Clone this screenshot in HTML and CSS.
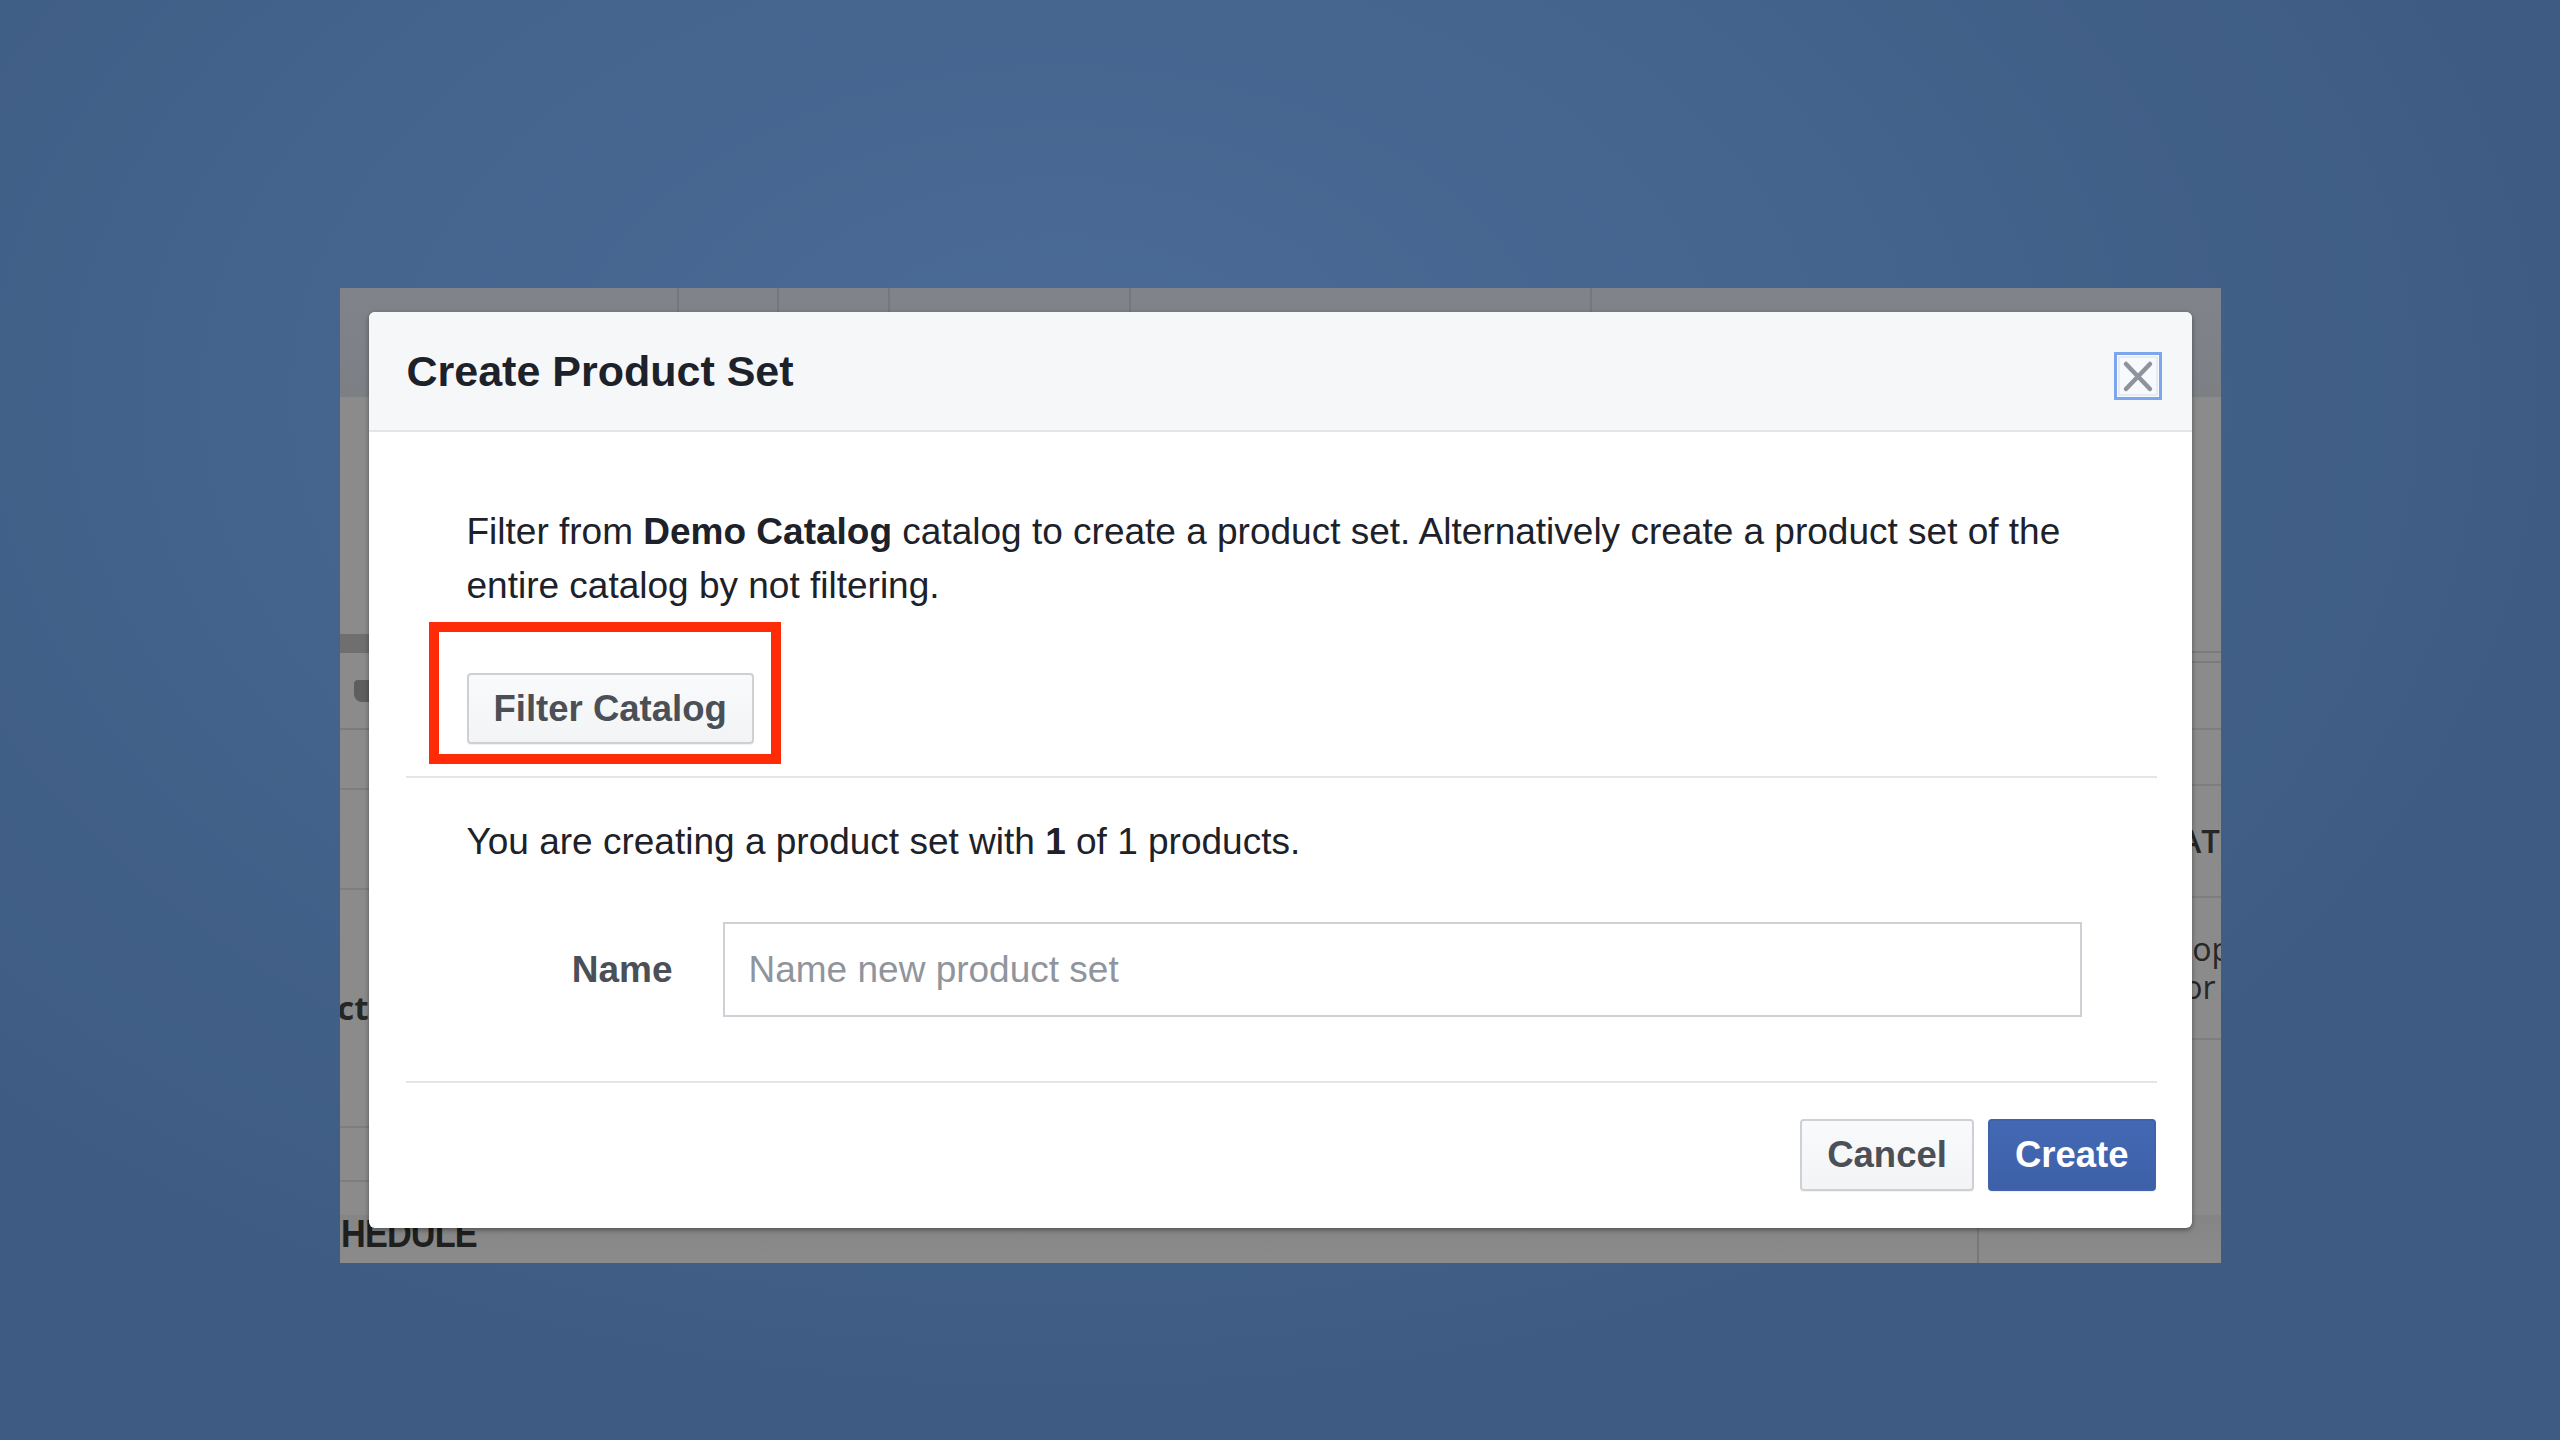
FILE: index.html
```html
<!DOCTYPE html>
<html lang="en">
<head>
<meta charset="utf-8">
<title>Create Product Set</title>
<link rel="stylesheet" href="styles.css">
</head>
<body>
<div class="stage">
  <div class="backdrop">
    <div class="page">
      <div class="page-top">
        <div class="pt-cell pt-1"></div>
        <div class="pt-cell pt-2"></div>
        <div class="pt-cell pt-3"></div>
        <div class="pt-cell pt-4"></div>
        <div class="pt-cell pt-5"></div>
        <div class="pt-cell pt-6"></div>
      </div>
      <div class="page-main">
        <div class="rail rail-left">
          <div class="lr lr-1"></div>
          <div class="lr lr-2"></div>
          <div class="lr lr-3"><span class="blob"></span></div>
          <div class="lr lr-4"></div>
          <div class="lr lr-5"></div>
          <div class="lr lr-6"><span class="rail-text bold">Product</span></div>
          <div class="lr lr-7"></div>
          <div class="lr lr-8"></div>
        </div>
        <div class="page-mid"></div>
        <div class="rail rail-right">
          <div class="rr rr-1"></div>
          <div class="rr rr-2"></div>
          <div class="rr rr-3"></div>
          <div class="rr rr-4"></div>
          <div class="rr rr-5"><span class="rail-text">AT</span></div>
          <div class="rr rr-6"><span class="rail-text stack">hop<br>for</span></div>
          <div class="rr rr-7"></div>
        </div>
      </div>
      <div class="page-bottom">
        <div class="pb-cell"><span class="hedule">HEDULE</span></div>
        <div class="pb-rest"></div>
      </div>
    </div>

    <div class="modal" role="dialog" aria-labelledby="modal-title">
      <div class="modal-header">
        <h1 class="modal-title" id="modal-title">Create Product Set</h1>
        <button class="close" aria-label="Close">
          <svg width="48" height="48" viewBox="0 0 48 48" aria-hidden="true">
            <rect x="1.5" y="1.5" width="45" height="45" fill="#f7f9fd" stroke="#7ea6ec" stroke-width="3"/>
            <rect x="5" y="5" width="38" height="38" fill="none" stroke="#d7deea" stroke-width="1"/>
            <path d="M12 12 L36 37 M36 12 L12 37" stroke="#8e949d" stroke-width="4.5" stroke-linecap="round"/>
          </svg>
        </button>
      </div>
      <div class="modal-body">
        <div class="section section-filter">
          <p class="intro">Filter from <b>Demo Catalog</b> catalog to create a product set. Alternatively create a product set of the entire catalog by not filtering.</p>
          <div class="filter-wrap">
            <button class="btn">Filter Catalog</button>
            <span class="annot"></span>
          </div>
        </div>
        <div class="section section-name">
          <p class="count">You are creating a product set with <b>1</b> of 1 products.</p>
          <div class="name-row">
            <label class="name-label" for="set-name">Name</label>
            <input class="name-input" id="set-name" type="text" placeholder="Name new product set">
          </div>
        </div>
        <div class="footer">
          <button class="btn btn-footer">Cancel</button>
          <button class="btn btn-footer btn-primary">Create</button>
        </div>
      </div>
    </div>
  </div>
</div>
</body>
</html>
```

FILE: styles.css
```css
html, body {
  margin: 0;
  padding: 0;
}

body {
  width: 2560px;
  height: 1440px;
  overflow: hidden;
  font-family: "Liberation Sans", Arial, Helvetica, sans-serif;
  background: radial-gradient(ellipse 1500px 1000px at 1060px 400px, #4c6c98 0%, #45658f 45%, #3e5c83 100%);
}

.stage {
  display: flex;
  justify-content: center;
  padding-top: 288px;
}

/* darkened page behind the dialog */
.backdrop {
  position: relative;
  width: 1881px;
  height: 975px;
  overflow: hidden;
  background: #8b8b8b;
}

.page {
  display: flex;
  flex-direction: column;
  height: 100%;
}

.page-top {
  display: flex;
  height: 109px;
  background: linear-gradient(#80838a, #7c7f84);
  flex: none;
}

.pt-cell {
  border-right: 2px solid #74777c;
  box-sizing: border-box;
}
.pt-1 { width: 339px; }
.pt-2 { width: 100px; }
.pt-3 { width: 111px; }
.pt-4 { width: 241px; }
.pt-5 { width: 461px; }
.pt-6 { flex: 1; border-right: none; }

.page-main {
  flex: 1;
  display: flex;
  min-height: 0;
}

.page-mid {
  flex: 1;
}

.rail {
  width: 40px;
  display: flex;
  flex-direction: column;
  overflow: hidden;
}

.lr, .rr {
  display: flex;
  align-items: center;
  box-sizing: border-box;
  overflow: hidden;
  white-space: nowrap;
  flex: none;
}

.lr {
  justify-content: flex-end;
  padding-right: 11px;
}

.rr {
  justify-content: flex-start;
  padding-left: 0;
}

.lr-1 { height: 237px; }
.lr-2 { height: 19px; background: #6f6f70; }
.lr-3 { height: 77px; border-bottom: 2px solid #7b7b7b; }
.lr-4 { height: 60px; border-bottom: 2px solid #7e7e7e; }
.lr-5 { height: 100px; border-bottom: 2px solid #7e7e7e; }
.lr-6 { height: 238px; border-bottom: 2px solid #7e7e7e; }
.lr-7 { height: 54px; border-bottom: 2px solid #7e7e7e; }
.lr-8 { flex: 1; }

.rr-1 { height: 256px; border-bottom: 2px solid #7b7b7b; }
.rr-2 { height: 10px; border-bottom: 2px solid #7b7b7b; }
.rr-3 { height: 67px; border-bottom: 2px solid #7e7e7e; }
.rr-4 { height: 56px; border-bottom: 2px solid #7e7e7e; }
.rr-5 { height: 112px; border-bottom: 2px solid #7e7e7e; }
.rr-6 { height: 142px; border-bottom: 2px solid #7e7e7e; }
.rr-7 { flex: 1; }

.blob {
  display: block;
  width: 26px;
  height: 22px;
  border-radius: 4px 0 0 8px;
  background: #5e5e5e;
  flex: none;
  margin-right: -11px;
}

.rail-text {
  font-family: "Open Sans", "Liberation Sans", sans-serif;
  font-size: 33px;
  line-height: 38px;
  color: #262626;
  flex: none;
}
.rail-text.bold { font-weight: 700; }
.rr-5 .rail-text { font-weight: 600; margin-left: -1px; }
.rr-6 .rail-text { margin-left: -8px; font-size: 32px; }

.page-bottom {
  display: flex;
  height: 48px;
  flex: none;
  background: linear-gradient(#858585, #8b8b8b);
}

.pb-cell {
  width: 1639px;
  border-right: 2px solid #777;
  box-sizing: border-box;
  padding-left: 1px;
}

.hedule {
  display: inline-block;
  font-family: "Liberation Sans", Arial, sans-serif;
  font-weight: 700;
  font-size: 39px;
  line-height: 38px;
  color: #1f1f1f;
  letter-spacing: -1px;
  transform: scaleX(0.88);
  transform-origin: left center;
}

.pb-rest { flex: 1; }

/* the dialog itself sits over the page */
.modal {
  position: absolute;
  top: 24px;
  left: 29px;
  width: 1823px;
  height: 916px;
  background: #fff;
  border-radius: 6px;
  box-shadow: 0 2px 5px rgba(0, 0, 0, 0.4);
  overflow: hidden;
  display: flex;
  flex-direction: column;
  color: #1d2129;
}

.modal-header {
  height: 118px;
  flex: none;
  display: flex;
  align-items: center;
  justify-content: space-between;
  padding: 0 30px 0 38px;
  background: #f6f7f9;
  border-bottom: 2px solid #e5e5e5;
}

.modal-title {
  margin: 0;
  font-size: 43px;
  font-weight: 700;
  color: #1d2129;
}

.close {
  width: 48px;
  height: 48px;
  padding: 0;
  margin: 10px 0 0 0;
  border: none;
  background: none;
  display: block;
}
.close svg { display: block; }

.modal-body {
  flex: 1;
  display: flex;
  flex-direction: column;
  padding: 0 35px 0 37px;
}

.section {
  border-bottom: 2px solid #e5e5e5;
  padding-left: 61px;
}

.section-filter {
  padding-top: 73px;
  padding-bottom: 32px;
}

.intro, .count {
  margin: 0;
  font-size: 37px;
  line-height: 54px;
  color: #1d2129;
}

.intro { padding-right: 40px; }

.filter-wrap {
  position: relative;
  display: inline-flex;
  margin-top: 60px;
}

.btn {
  font-family: "Liberation Sans", Arial, Helvetica, sans-serif;
  font-size: 36.5px;
  font-weight: 700;
  color: #4b4f56;
  background: linear-gradient(#f9fafb, #f3f4f6);
  border: 2px solid #ced0d4;
  border-radius: 4px;
  height: 71px;
  padding: 0 25px;
  box-shadow: 0 1px 1px rgba(0, 0, 0, 0.06);
  display: inline-flex;
  align-items: center;
  justify-content: center;
}

.annot {
  position: absolute;
  left: -38px;
  top: -51px;
  right: -27px;
  bottom: -20px;
  border: 10px solid #ff2b07;
  pointer-events: none;
}

.section-name {
  padding-top: 37px;
  padding-bottom: 64px;
}

.name-row {
  display: flex;
  align-items: center;
  margin-top: 53px;
  margin-right: 75px;
}

.name-label {
  width: 206px;
  text-align: right;
  font-size: 37px;
  font-weight: 700;
  color: #4b4f56;
  flex: none;
}

.name-input {
  flex: 1;
  margin-left: 50px;
  height: 95px;
  box-sizing: border-box;
  border: 2px solid #cdd0d5;
  border-radius: 0;
  padding: 0 24px;
  font-family: "Liberation Sans", Arial, Helvetica, sans-serif;
  font-size: 37px;
  color: #1d2129;
  background: #fff;
  outline: none;
}

.name-input::placeholder {
  color: #90949c;
}

.footer {
  display: flex;
  justify-content: flex-end;
  gap: 14px;
  padding: 36px 1px 37px 0;
}

.btn-footer {
  height: 72px;
}

.btn-primary {
  color: #fff;
  background: linear-gradient(#4469b4, #3d60a8);
  border-color: #3f62ab;
}
```
